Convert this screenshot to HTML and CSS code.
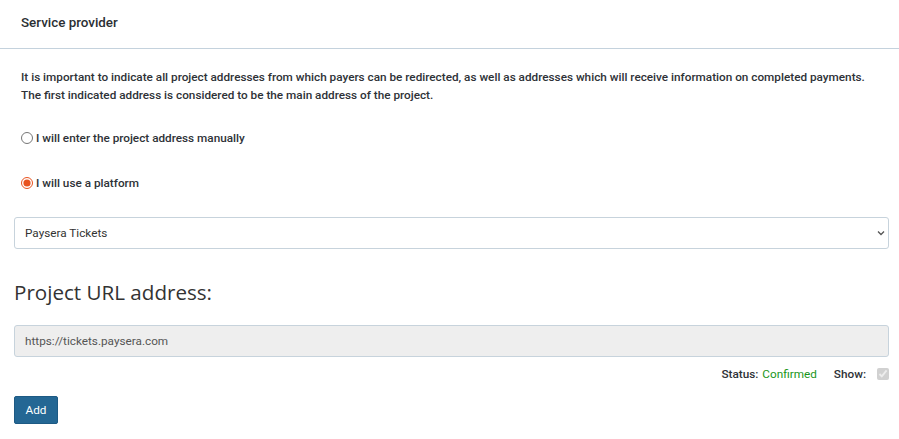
FILE: index.html
```html
<!DOCTYPE html>
<html lang="en">
<head>
<meta charset="utf-8">
<title>Service provider</title>
<link rel="stylesheet" href="styles.css">
</head>
<body>
<div class="panel">
  <div class="panel-heading">Service provider</div>
  <div class="panel-body">
    <p class="intro">It is important to indicate all project addresses from which payers can be redirected, as well as addresses which will receive information on completed payments.<br>The first indicated address is considered to be the main address of the project.</p>
    <label class="radio radio-first"><input type="radio" name="mode"> I will enter the project address manually</label>
    <label class="radio radio-second"><input type="radio" name="mode" checked> I will use a platform</label>
    <div class="select-wrap">
      <select class="control">
        <option>Paysera Tickets</option>
      </select>
      <svg class="chev" width="8" height="6" viewBox="0 0 8 6"><path d="M1 1.5 L4 4.5 L7 1.5" fill="none" stroke="#555" stroke-width="1.3"/></svg>
    </div>
    <h3 class="url-title">Project URL address:</h3>
    <input class="control disabled" type="text" value="https://tickets.paysera.com" disabled>
    <div class="status-row">
      <span class="lbl">Status:</span> <span class="ok">Confirmed</span>
      <span class="lbl show">Show:</span>
      <input type="checkbox" checked disabled class="chk">
    </div>
    <button class="btn">Add</button>
  </div>
</div>
</body>
</html>
```
FILE: styles.css
```css
* { box-sizing: border-box; }
html, body { margin: 0; padding: 0; background: #fff; }
body {
  font-family: Roboto, "Liberation Sans", Arial, sans-serif;
  color: #333;
  font-size: 11.75px;
}
.panel-heading {
  padding: 13px 21px 15px;
  font-size: 13.4px;
  line-height: 20px;
  font-weight: 500;
  color: #2b2f33;
  border-bottom: 1px solid #c4d2dd;
}
.panel-body {
  padding: 19px 10px 0 14px;
}
.intro {
  margin: 0 0 0 7px;
  font-weight: 500;
  line-height: 18px;
  color: #2e3237;
}
.radio {
  display: flex;
  align-items: center;
  margin-left: 7px;
  font-weight: 500;
  color: #2e3237;
  line-height: 18px;
}
.radio input {
  margin: 0 3px 0 0;
  width: 12px;
  height: 12px;
  accent-color: #e8531f;
}
.radio-first { margin-top: 25px; }
.radio-second { margin-top: 27px; }
.select-wrap {
  position: relative;
  margin-top: 25px;
}
.control {
  display: block;
  width: 100%;
  height: 32px;
  padding: 0 10px;
  font-family: inherit;
  font-size: 11.75px;
  color: #333;
  background: #fff;
  border: 1px solid #c7d3dc;
  border-radius: 3px;
  outline: none;
}
select.control {
  appearance: none;
  -webkit-appearance: none;
}
.chev {
  position: absolute;
  right: 4px;
  top: 13px;
}
.url-title {
  margin: 29px 0 0 0;
  font-family: "Open Sans", Roboto, sans-serif;
  font-size: 20.6px;
  font-weight: 400;
  line-height: 28px;
  color: #333;
}
.control.disabled {
  margin-top: 19px;
  background: #eee;
  color: #555;
}
.status-row {
  display: flex;
  justify-content: flex-end;
  align-items: center;
  margin-top: 8px;
  line-height: 18px;
}
.lbl { font-weight: 500; color: #2e3237; }
.ok { color: #1a961a; margin-left: 4px; }
.show { margin-left: 17px; }
.chk {
  margin: 0 0 0 11px;
  width: 12px;
  height: 12px;
}
.btn {
  margin-top: 13px;
  height: 28px;
  padding: 0 10.5px;
  background: #246794;
  color: #fff;
  border: 1px solid #1d5a84;
  border-radius: 2px;
  font-family: inherit;
  font-size: 11.75px;
}
```
